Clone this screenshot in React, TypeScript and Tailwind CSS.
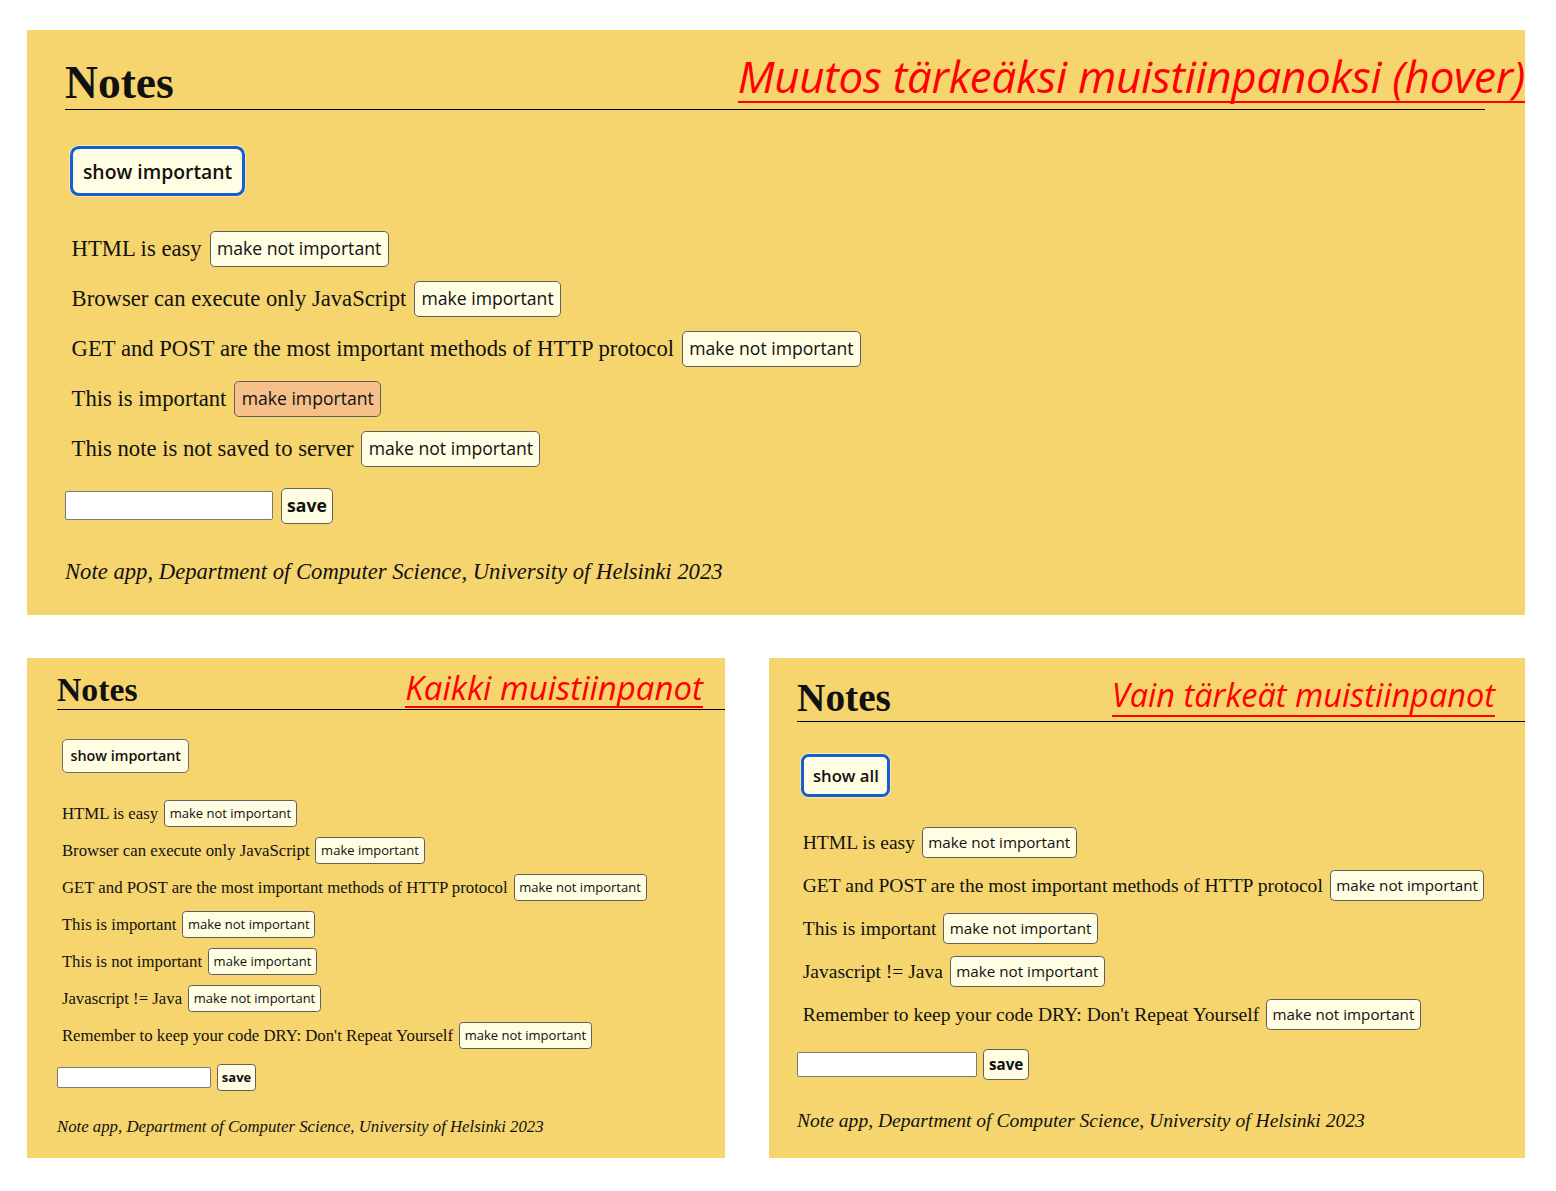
import { ReactNode } from "react";

type Note = { content: string; label: string; hover?: boolean };

const topNotes: Note[] = [
  { content: "HTML is easy", label: "make not important" },
  { content: "Browser can execute only JavaScript", label: "make important" },
  { content: "GET and POST are the most important methods of HTTP protocol", label: "make not important" },
  { content: "This is important", label: "make important", hover: true },
  { content: "This note is not saved to server", label: "make not important" },
];

const allNotes: Note[] = [
  { content: "HTML is easy", label: "make not important" },
  { content: "Browser can execute only JavaScript", label: "make important" },
  { content: "GET and POST are the most important methods of HTTP protocol", label: "make not important" },
  { content: "This is important", label: "make not important" },
  { content: "This is not important", label: "make important" },
  { content: "Javascript != Java", label: "make not important" },
  { content: "Remember to keep your code DRY: Don't Repeat Yourself", label: "make not important" },
];

const importantNotes: Note[] = [
  { content: "HTML is easy", label: "make not important" },
  { content: "GET and POST are the most important methods of HTTP protocol", label: "make not important" },
  { content: "This is important", label: "make not important" },
  { content: "Javascript != Java", label: "make not important" },
  { content: "Remember to keep your code DRY: Don't Repeat Yourself", label: "make not important" },
];

function NotesPanel(props: {
  className: string;
  notes: Note[];
  showLabel: string;
  focused: boolean;
  children?: ReactNode;
}) {
  const { className, notes, showLabel, focused, children } = props;

  return (
    <div className={`relative bg-[#f6d56f] font-['Liberation_Serif',serif] text-[#111] ${className}`}>
      <h1 className="text-[2.07em] font-bold leading-none pb-[0.08em] border-b border-black">
        Notes
      </h1>
      <div className="mt-[1.64em] pl-[0.23em] flex">
        {focused ? (
          <button className="inline-flex items-center h-[2.27em] px-[0.45em] bg-[#fffde2] border-[3px] border-[#155ed6] rounded-[0.4em] shadow-[0_0_0_1px_#fff6]">
            <span className="font-['Open_Sans',sans-serif] text-[0.88em] font-semibold">{showLabel}</span>
          </button>
        ) : (
          <button className="inline-flex items-center h-[2.09em] m-[0.09em] px-[0.45em] bg-[#fffde2] border border-[#6b6b6b] rounded-[0.3em]">
            <span className="font-['Open_Sans',sans-serif] text-[0.88em] font-semibold">{showLabel}</span>
          </button>
        )}
      </div>
      <ul className="mt-[1.27em]">
        {notes.map((note) => (
          <li key={note.content} className="flex items-center h-[2.27em] gap-[0.36em] pl-[0.3em]">
            <span className="text-[1.03em]">{note.content}</span>
            <button
              className={`font-['Open_Sans',sans-serif] text-[0.8em] leading-none h-[2.045em] px-[0.36em] border border-[#5f5f5f] rounded-[0.28em] ${
                note.hover ? "bg-[#f5c08a]" : "bg-[#fffde2]"
              }`}
            >
              {note.label}
            </button>
          </li>
        ))}
      </ul>
      <form className="mt-[0.64em] flex items-center gap-[0.36em]">
        <input className="w-[9.45em] h-[1.32em] bg-white border border-[#7a7a7a] rounded-[2px]" />
        <button
          type="button"
          className="font-['Open_Sans',sans-serif] text-[0.8em] font-bold leading-none h-[2.045em] px-[0.3em] bg-[#fffde2] border border-[#5f5f5f] rounded-[0.28em]"
        >
          save
        </button>
      </form>
      <p className="mt-[1.36em] italic leading-[1.5] text-[1.03em]">
        Note app, Department of Computer Science, University of Helsinki 2023
      </p>
      {children}
    </div>
  );
}

function Annotation(props: { className: string; text: string }) {
  return (
    <div
      className={`absolute font-['Open_Sans',sans-serif] italic text-[#ff0000] leading-none border-b-2 border-[#ff0000] whitespace-nowrap ${props.className}`}
    >
      {props.text}
    </div>
  );
}

export default function App() {
  return (
    <div className="w-[1556px] h-[1191px] bg-white pt-[30px] pl-[27px]">
      <NotesPanel
        className="w-[1498px] h-[585px] text-[22px] pt-[30px] pl-[38px] pr-[40px]"
        notes={topNotes}
        showLabel="show important"
        focused={true}
      >
        <Annotation
          className="right-0 top-[24px] text-[44px] tracking-[-0.3px] pb-[3px]"
          text="Muutos tärkeäksi muistiinpanoksi (hover)"
        />
      </NotesPanel>
      <div className="mt-[43px] flex gap-[44px]">
        <NotesPanel
          className="w-[698px] h-[500px] text-[16.3px] pt-[15px] pl-[30px]"
          notes={allNotes}
          showLabel="show important"
          focused={false}
        >
          <Annotation className="right-[22px] top-[13px] text-[33px] pb-[2px]" text="Kaikki muistiinpanot" />
        </NotesPanel>
        <NotesPanel
          className="w-[756px] h-[500px] text-[19px] pt-[21px] pl-[28px]"
          notes={importantNotes}
          showLabel="show all"
          focused={true}
        >
          <Annotation className="right-[30px] top-[21px] text-[32.5px] pb-[3px]" text="Vain tärkeät muistiinpanot" />
        </NotesPanel>
      </div>
    </div>
  );
}
